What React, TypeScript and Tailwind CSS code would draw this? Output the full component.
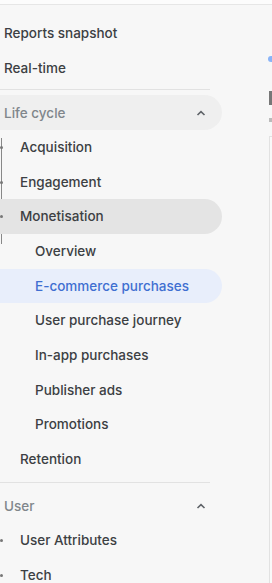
import React from "react";

const font = { fontFamily: "Inter, 'Noto Sans', Roboto, sans-serif" };

function Chevron() {
  return (
    <svg width="10" height="6" viewBox="0 0 10 6" className="mr-[16px]">
      <path d="M1.5 5 L5 1.6 L8.5 5" fill="none" stroke="#5f6368" strokeWidth="1.6" />
    </svg>
  );
}

function Row({
  label,
  indent,
  dot,
  bg,
  color,
}: {
  label: string;
  indent: number;
  dot?: boolean;
  bg?: string;
  color?: string;
}) {
  return (
    <div className="relative h-[34.67px] flex items-center w-[222px]">
      {bg ? (
        <div className={`absolute left-[-20px] right-0 top-0 bottom-0 rounded-r-full ${bg}`} />
      ) : null}
      {dot ? <div className="absolute left-0 top-[16px] w-[3px] h-[3px] rounded-full bg-[#777]" /> : null}
      <span
        className={`relative text-[13.5px] font-medium whitespace-nowrap ${color ?? "text-[#3c4043]"}`}
        style={{ paddingLeft: indent }}
      >
        {label}
      </span>
    </div>
  );
}

function Header({ label, bg }: { label: string; bg?: string }) {
  return (
    <div className="relative h-[34.67px] flex items-center justify-between w-[222px]">
      {bg ? <div className={`absolute left-[-20px] right-0 top-0 bottom-0 rounded-r-full ${bg}`} /> : null}
      <span className="relative pl-[4px] text-[13.5px] font-medium text-[#80868b]">{label}</span>
      <span className="relative">
        <Chevron />
      </span>
    </div>
  );
}

export default function App() {
  return (
    <div className="w-[272px] h-[583px] overflow-hidden bg-[#f7f7f7] flex flex-col" style={font}>
      <div className="h-[5px] bg-[#fcfcfc] border-b border-[#e6e6e6] shrink-0" />
      <div className="flex flex-1">
        <div className="w-[266px] pt-[11px] relative">
          <Row label="Reports snapshot" indent={4} />
          <Row label="Real-time" indent={4} />
          <div className="mt-[4px] mb-[5px] h-px w-[210px] bg-[#e2e2e2]" />
          <div className="relative">
            <Header label="Life cycle" bg="bg-[#efefef]" />
            <div className="relative">
              <div className="absolute left-[1px] top-[8px] h-[106px] w-px bg-[#888]" />
              <Row label="Acquisition" indent={20} dot />
              <Row label="Engagement" indent={20} dot />
              <Row label="Monetisation" indent={20} dot bg="bg-[#e4e4e4]" />
              <Row label="Overview" indent={35} />
              <Row label="E-commerce purchases" indent={35} bg="bg-[#e8eefb]" color="text-[#3f6fd1]" />
              <Row label="User purchase journey" indent={35} />
              <Row label="In-app purchases" indent={35} />
              <Row label="Publisher ads" indent={35} />
              <Row label="Promotions" indent={35} />
              <Row label="Retention" indent={20} />
            </div>
          </div>
          <div className="mt-[5px] mb-[6px] h-px w-[210px] bg-[#e2e2e2]" />
          <Header label="User" />
          <Row label="User Attributes" indent={20} dot />
          <Row label="Tech" indent={20} dot />
        </div>
        <div className="flex-1 flex flex-col">
          <div className="mt-[51px] h-[6px] w-[4px] ml-[2px] rounded-l-full bg-[#8ab4f8]" />
          <div className="mt-[29px] h-[14px] w-[3px] ml-[3px] bg-[#777]" />
          <div className="mt-[13px] h-[4px] w-[3px] ml-[3px] bg-[#bbb]" />
          <div className="mt-[14px] flex-1 ml-[3px] border-l border-t border-[#e2e2e2] bg-[#f9f9f9]" />
        </div>
      </div>
    </div>
  );
}
